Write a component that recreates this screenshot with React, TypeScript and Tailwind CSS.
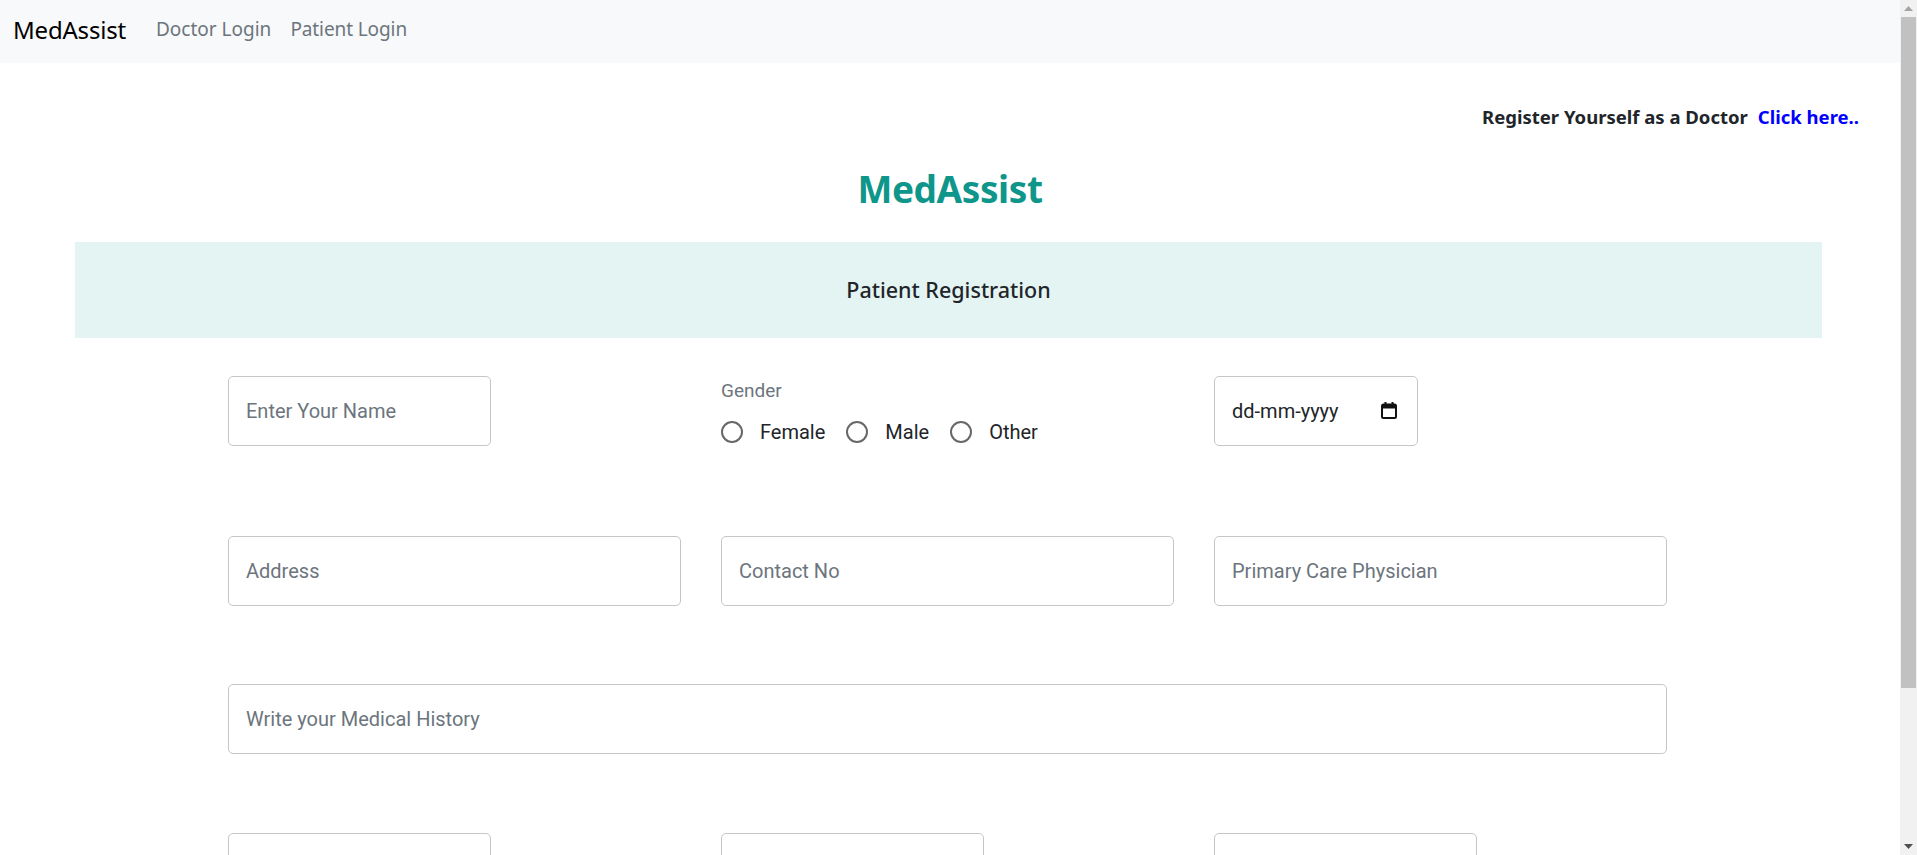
import React from 'react';

const sans = "font-['Noto_Sans',sans-serif]";
const roboto = "font-['Roboto',sans-serif]";

const Field = ({ placeholder = '', className = '' }: { placeholder?: string; className?: string }) => (
  <div
    className={`h-[70px] flex items-center px-[17px] border border-[#c6c6c6] rounded-[5px] bg-white ${roboto} text-[20px] text-[#6c757d] ${className}`}
  >
    {placeholder}
  </div>
);

const Radio = ({ label }: { label: string }) => (
  <label className="flex items-center">
    <span className="w-[22px] h-[22px] rounded-full border-2 border-[#686868] bg-white" />
    <span className="ml-[17px] text-[20px] text-[#212529]">{label}</span>
  </label>
);

// browser scrollbar as it shows in the screenshot
const Scrollbar = () => (
  <div className="w-[17px] h-[855px] bg-[#f1f1f1] flex flex-col items-center shrink-0">
    <div className="h-[17px] flex items-center justify-center">
      <svg width="9" height="5" viewBox="0 0 9 5">
        <polygon points="0,5 4.5,0 9,5" fill="#a3a3a3" />
      </svg>
    </div>
    <div className="w-[15px] h-[671px] bg-[#c1c1c1]" />
    <div className="flex-1" />
    <div className="h-[17px] flex items-center justify-center">
      <svg width="9" height="5" viewBox="0 0 9 5">
        <polygon points="0,0 9,0 4.5,5" fill="#505050" />
      </svg>
    </div>
  </div>
);

export default function App() {
  return (
    <div className={`h-[855px] overflow-hidden flex bg-white ${sans}`}>
      <div className="flex-1 min-w-0">
        {/* Navbar */}
        <nav className="h-[63px] bg-[#f8f9fa] flex items-center pl-[13px] pb-[4px]">
          <span className="text-[24px] text-black tracking-[-0.2px]">MedAssist</span>
          <span className="ml-[30px] text-[19px] text-[#6c757d]">Doctor Login</span>
          <span className="ml-[19px] text-[19px] text-[#6c757d] tracking-[-0.1px]">Patient Login</span>
        </nav>

        {/* Register link */}
        <div className="flex justify-end pr-[41px] mt-[40px] text-[18.5px] font-bold leading-[28px]">
          <span className="text-[#212529]">Register Yourself as a Doctor</span>
          <a className="ml-[10px] text-[#0000ff]">Click here..</a>
        </div>

        {/* Title */}
        <h1 className="mt-[33px] text-center text-[37px] font-bold leading-[50px] text-[#0e968a] tracking-[-0.4px]">
          MedAssist
        </h1>

        {/* Banner */}
        <div className="mt-[28px] ml-[75px] w-[1747px] h-[96px] bg-[#e4f4f3] flex items-center justify-center">
          <h2 className="text-[21.5px] font-medium text-[#212529]">Patient Registration</h2>
        </div>

        {/* Form */}
        <div className="ml-[228px] w-[1439px] mt-[38px]">
          <div className="grid grid-cols-[453px_453px_453px] gap-x-[40px]">
            <Field placeholder="Enter Your Name" className="w-[263px]" />
            <div className={`${roboto} pt-[3px]`}>
              <div className="text-[19px] text-[#6c757d] leading-[24px]">Gender</div>
              <div className="mt-[14px] flex items-center gap-[21px]">
                <Radio label="Female" />
                <Radio label="Male" />
                <Radio label="Other" />
              </div>
            </div>
            <div
              className={`w-[204px] h-[70px] flex items-center justify-between pl-[17px] pr-[20px] border border-[#c6c6c6] rounded-[5px] ${roboto} text-[20px] text-[#212529]`}
            >
              <span>dd-mm-yyyy</span>
              <svg width="16" height="17" viewBox="0 0 16 17" className="mt-[-2px]">
                <rect x="1" y="2.5" width="14" height="13.5" rx="1.5" fill="none" stroke="#111" strokeWidth="2" />
                <rect x="1" y="2.5" width="14" height="4" fill="#111" />
                <rect x="3.5" y="0" width="2" height="3" fill="#111" />
                <rect x="10.5" y="0" width="2" height="3" fill="#111" />
              </svg>
            </div>
          </div>

          <div className="grid grid-cols-[453px_453px_453px] gap-x-[40px] mt-[89px]">
            <Field placeholder="Address" />
            <Field placeholder="Contact No" />
            <Field placeholder="Primary Care Physician" />
          </div>

          <div className="mt-[78px]">
            <Field placeholder="Write your Medical History" />
          </div>

          <div className="grid grid-cols-[453px_453px_453px] gap-x-[40px] mt-[79px]">
            <Field className="w-[263px]" />
            <Field className="w-[263px]" />
            <Field className="w-[263px]" />
          </div>
        </div>
      </div>
      <Scrollbar />
    </div>
  );
}
